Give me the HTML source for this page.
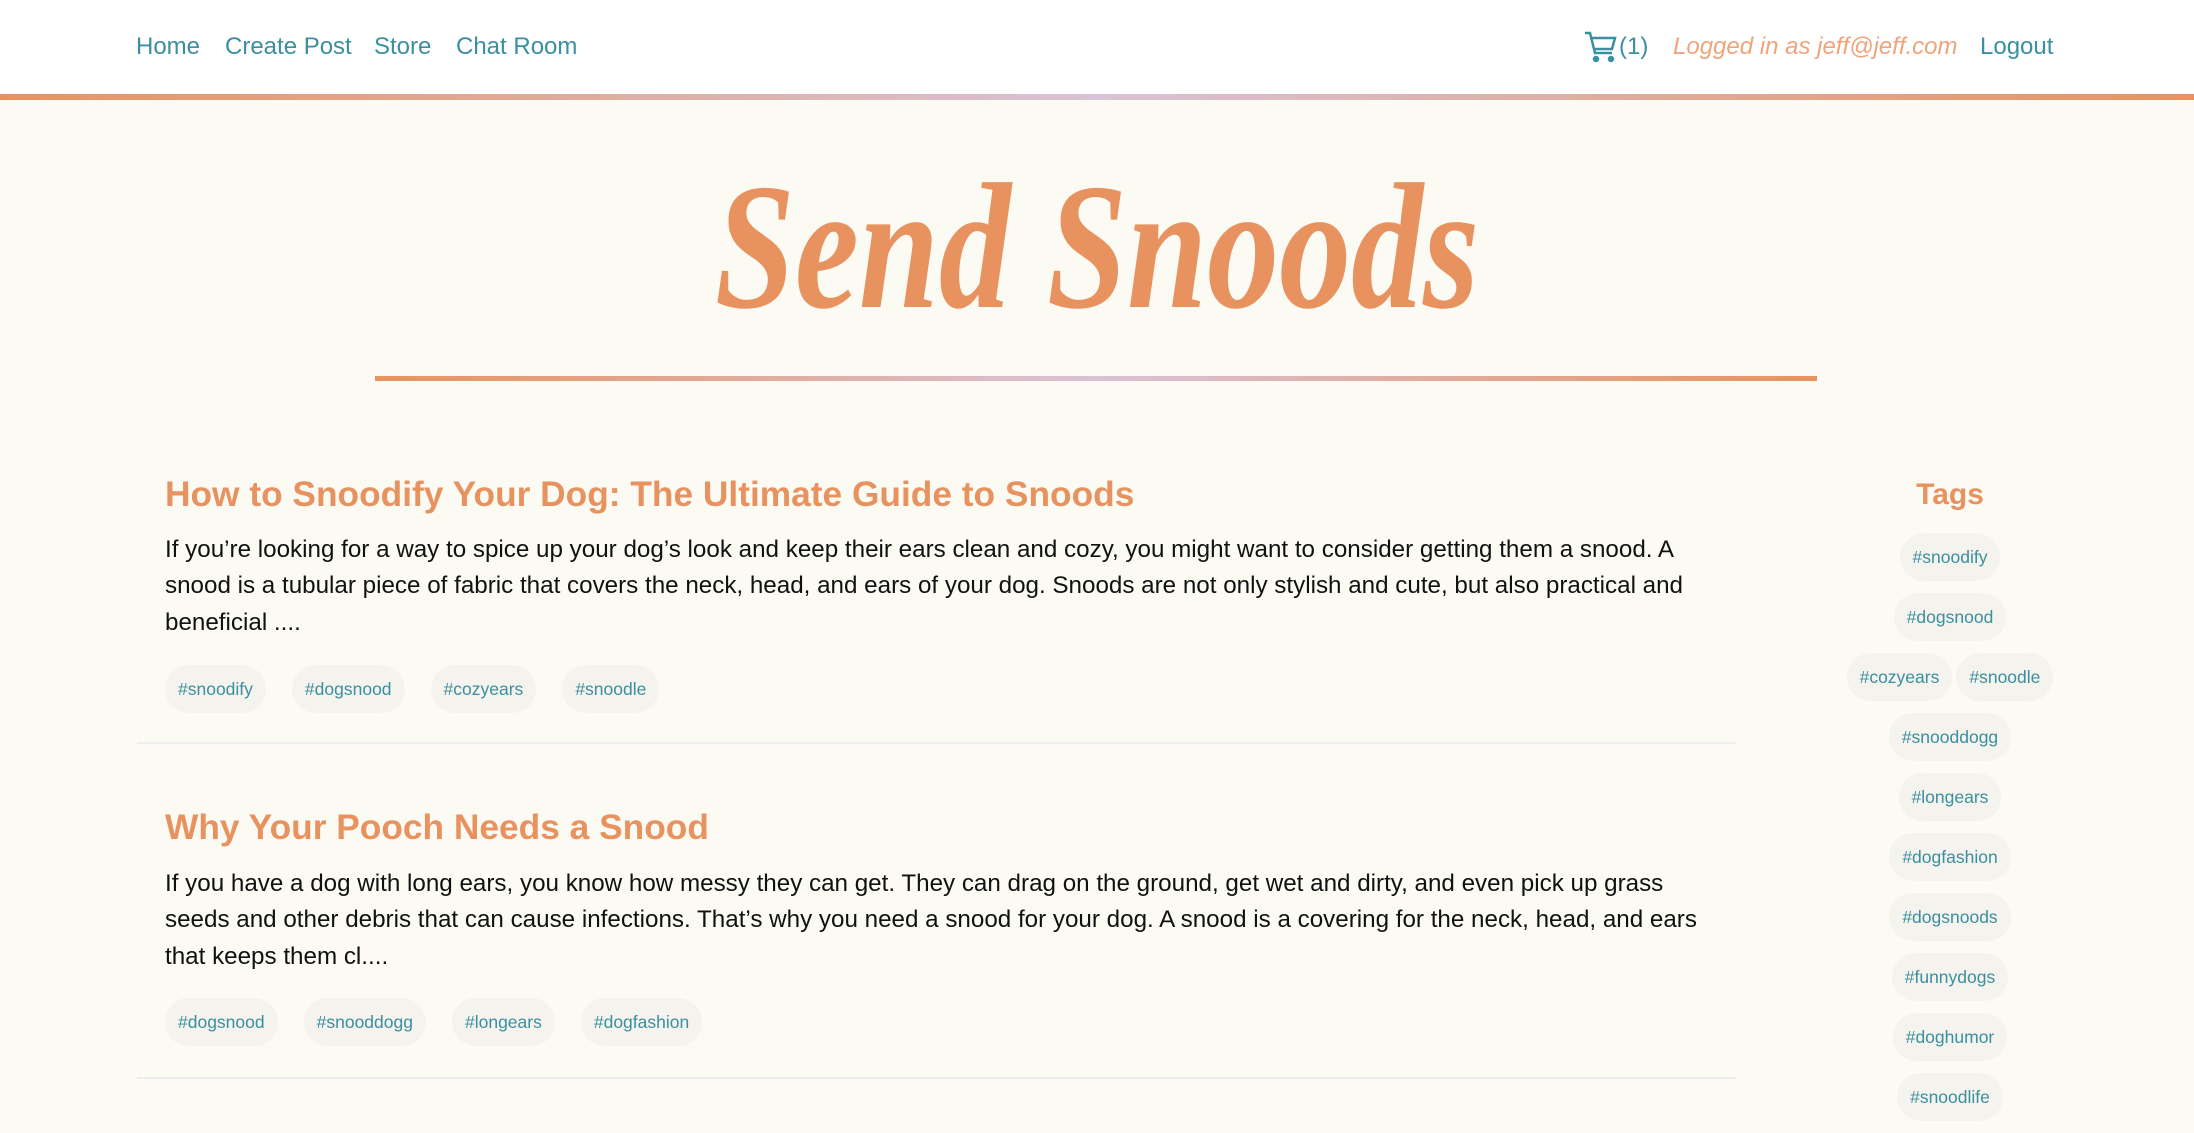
<!DOCTYPE html>
<html><head><meta charset="utf-8"><style>
*{margin:0;padding:0;box-sizing:border-box}
body{width:2194px;height:1088px;overflow:hidden;background:#fbfaf3;font-family:"Liberation Sans",sans-serif;position:relative}
.hdr{position:absolute;left:0;top:0;width:2194px;height:95px;background:#fff}
.bar{position:absolute;left:0;top:94px;width:2194px;height:6px;background:linear-gradient(90deg,#e8935f,#d9c2d6 50%,#e8935f)}
.nav{position:absolute;top:33px;font-size:24px;color:#3a8fa0;white-space:nowrap}
.title{position:absolute;left:0;width:2194px;top:147px;text-align:center;font-family:"Liberation Serif",serif;font-style:italic;font-weight:bold;font-size:180px;line-height:200px;color:#e8935f;transform:scaleX(0.8)}
.line{position:absolute;left:375px;top:376px;width:1442px;height:5px;background:linear-gradient(90deg,#e8935f,#d9c2d6 50%,#e8935f)}
h2{position:absolute;left:165px;font-size:35.3px;color:#e8935f;font-weight:bold;white-space:nowrap}
.p{position:absolute;left:165px;width:1528px;font-size:24.2px;line-height:36.4px;color:#111}
.tags{position:absolute;left:165px;display:flex;gap:26px}
.tag{height:48px;line-height:48px;padding:0 13px;border-radius:24px;background:#f5f3ee;color:#3a8fa0;font-size:17.5px}
.sep{position:absolute;left:137px;width:1599px;height:2px;background:#eeeef0}
.side{position:absolute;left:1840px;width:220px;top:470px;text-align:center}
.side h3{font-size:30px;color:#e8935f;height:50px;line-height:50px;margin-bottom:13px}
.side .row{display:flex;justify-content:center;gap:4px;margin-bottom:12px}
</style></head><body>
<div class="hdr"></div>
<div class="bar"></div>
<div class="nav" style="left:136px">Home</div>
<div class="nav" style="left:225px">Create Post</div>
<div class="nav" style="left:374px">Store</div>
<div class="nav" style="left:456px">Chat Room</div>
<svg style="position:absolute;left:1584px;top:31px" width="34" height="32" viewBox="0 0 34 32" fill="none" stroke="#3a8fa0" stroke-width="2.5"><path d="M1 2h5l5 20h17M8 7h23l-3 11H10"/><circle cx="12" cy="28" r="2" fill="#3a8fa0"/><circle cx="27" cy="28" r="2" fill="#3a8fa0"/></svg>
<div class="nav" style="left:1619px">(1)</div>
<div class="nav" style="left:1673px;color:#efa47a;font-style:italic">Logged in as jeff@jeff.com</div>
<div class="nav" style="left:1980px">Logout</div>
<div class="title">Send Snoods</div>
<div class="line"></div>

<h2 style="top:475px">How to Snoodify Your Dog: The Ultimate Guide to Snoods</h2>
<div class="p" style="top:532px">If you’re looking for a way to spice up your dog’s look and keep their ears clean and cozy, you might want to consider getting them a snood. A snood is a tubular piece of fabric that covers the neck, head, and ears of your dog. Snoods are not only stylish and cute, but also practical and beneficial ....</div>
<div class="tags" style="top:665px"><span class="tag">#snoodify</span><span class="tag">#dogsnood</span><span class="tag">#cozyears</span><span class="tag">#snoodle</span></div>
<div class="sep" style="top:742px"></div>

<h2 style="top:808px">Why Your Pooch Needs a Snood</h2>
<div class="p" style="top:866px;width:1585px">If you have a dog with long ears, you know how messy they can get. They can drag on the ground, get wet and dirty, and even pick up grass<br>seeds and other debris that can cause infections. That’s why you need a snood for your dog. A snood is a covering for the neck, head, and ears<br>that keeps them cl....</div>
<div class="tags" style="top:998px"><span class="tag">#dogsnood</span><span class="tag">#snooddogg</span><span class="tag">#longears</span><span class="tag">#dogfashion</span></div>
<div class="sep" style="top:1077px"></div>

<div class="side">
<h3>Tags</h3>
<div class="row"><span class="tag">#snoodify</span></div>
<div class="row"><span class="tag">#dogsnood</span></div>
<div class="row"><span class="tag">#cozyears</span><span class="tag">#snoodle</span></div>
<div class="row"><span class="tag">#snooddogg</span></div>
<div class="row"><span class="tag">#longears</span></div>
<div class="row"><span class="tag">#dogfashion</span></div>
<div class="row"><span class="tag">#dogsnoods</span></div>
<div class="row"><span class="tag">#funnydogs</span></div>
<div class="row"><span class="tag">#doghumor</span></div>
<div class="row"><span class="tag">#snoodlife</span></div>
</div>
</body></html>
